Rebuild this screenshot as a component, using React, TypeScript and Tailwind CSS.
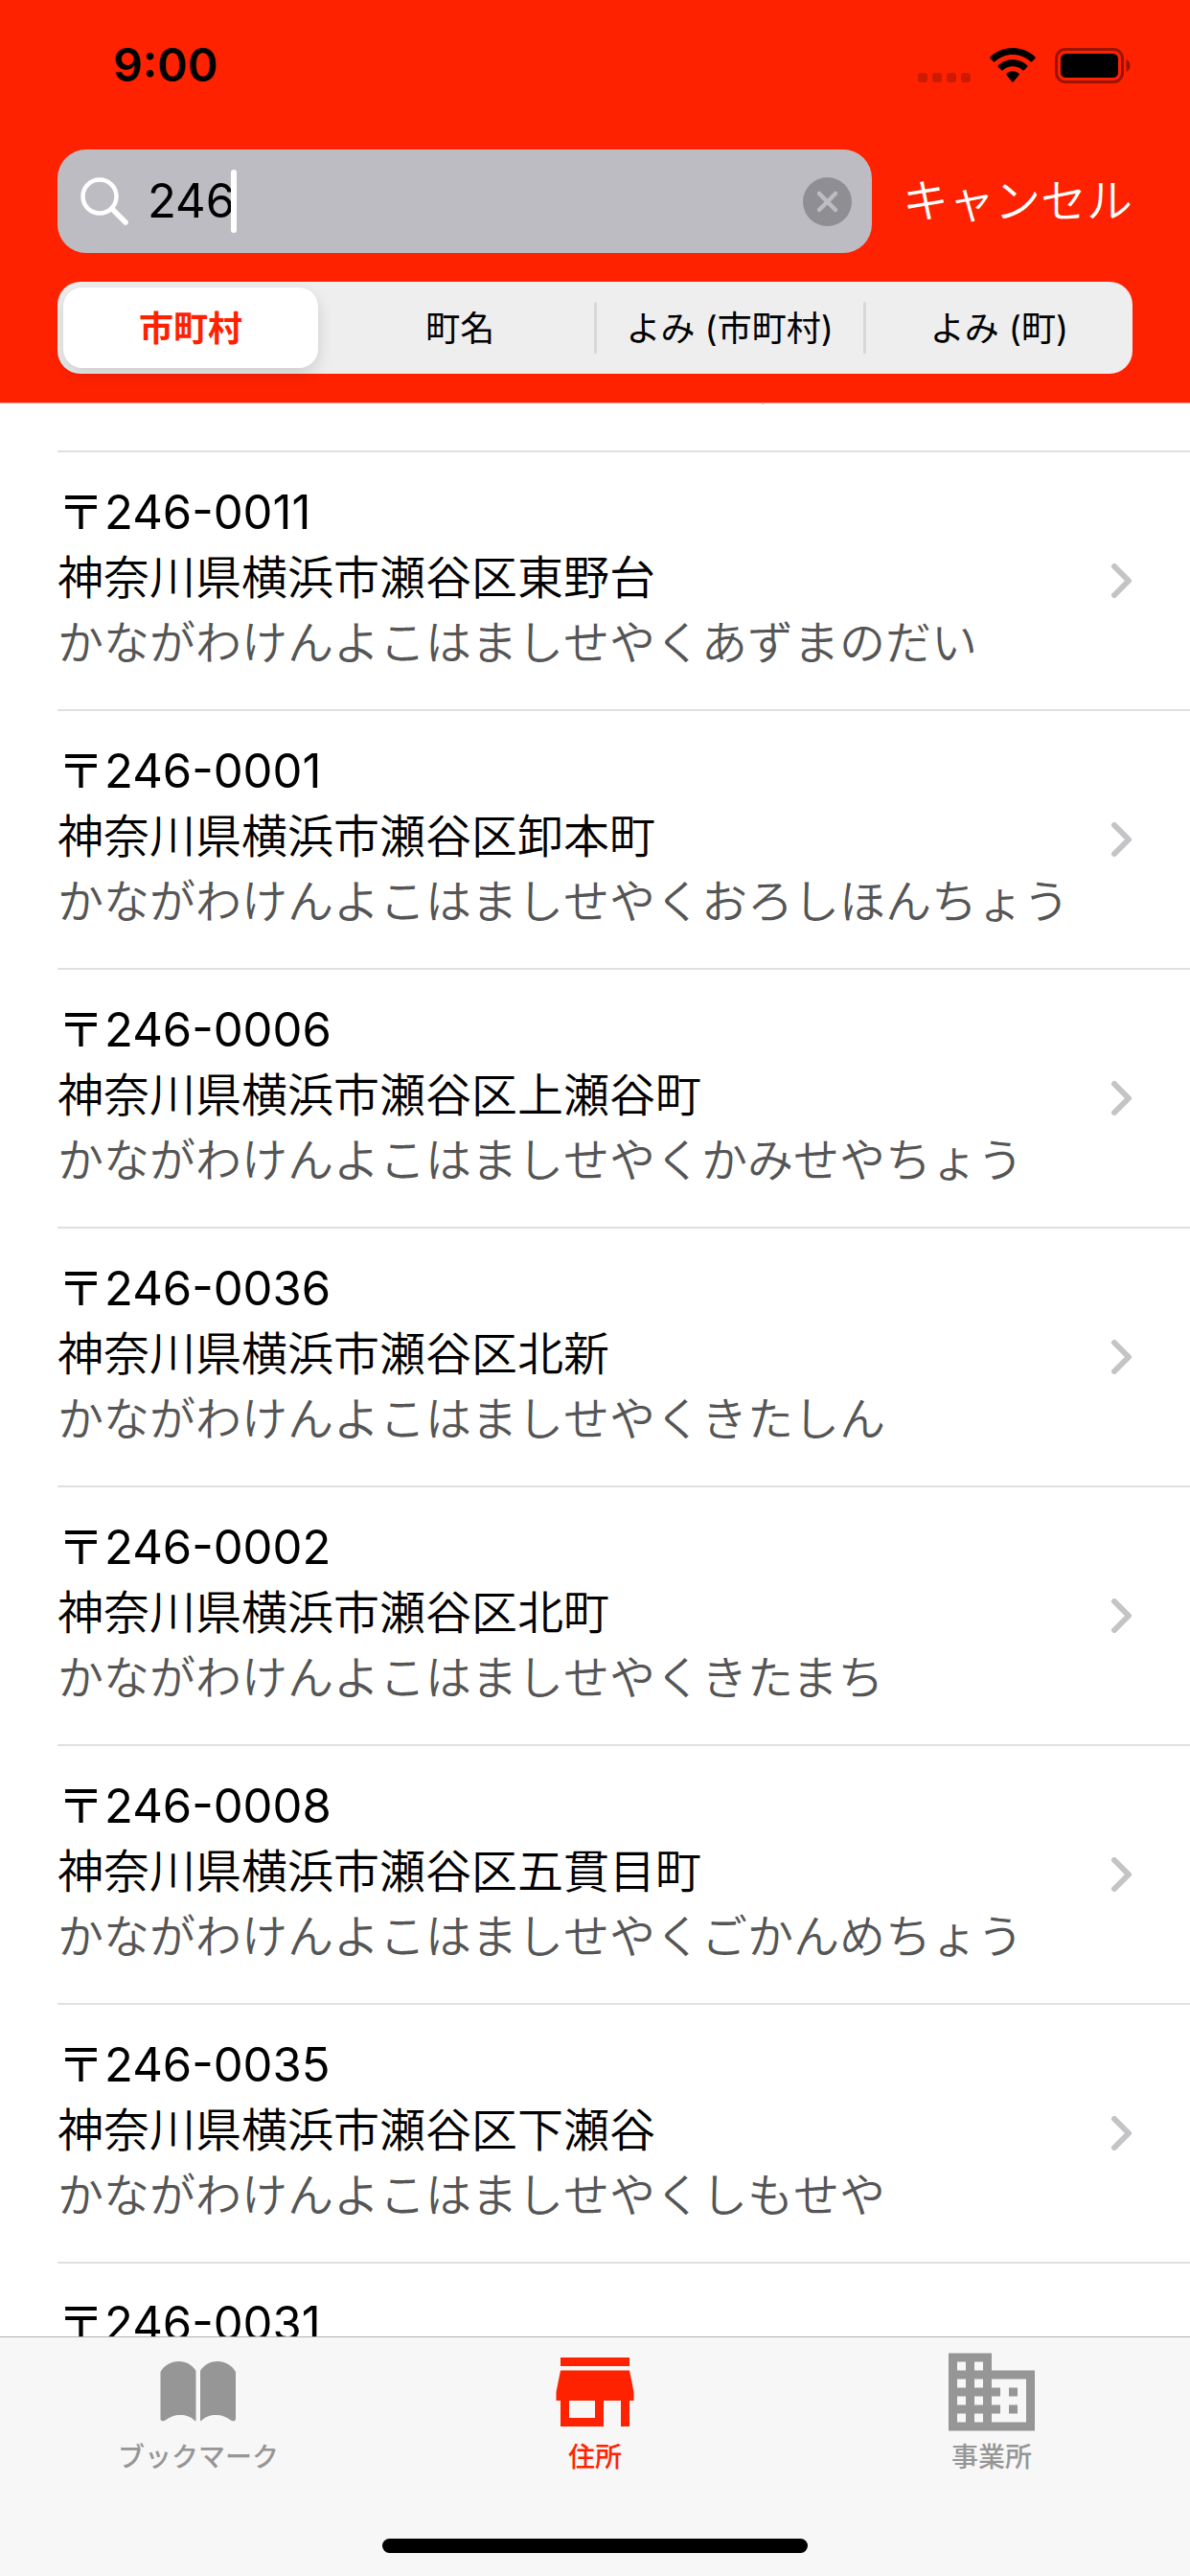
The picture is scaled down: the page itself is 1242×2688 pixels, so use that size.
import React, { useLayoutEffect, useRef, useState } from 'react';
import { MdBusiness, MdStore } from 'react-icons/md';

interface Address {
  zip: string;
  name: string;
  kana: string;
}

const addresses: Address[] = [
  { zip: '246-0012', name: '神奈川県横浜市瀬谷区東野', kana: 'かながわけんよこはましせやくあずまの' },
  { zip: '246-0011', name: '神奈川県横浜市瀬谷区東野台', kana: 'かながわけんよこはましせやくあずまのだい' },
  { zip: '246-0001', name: '神奈川県横浜市瀬谷区卸本町', kana: 'かながわけんよこはましせやくおろしほんちょう' },
  { zip: '246-0006', name: '神奈川県横浜市瀬谷区上瀬谷町', kana: 'かながわけんよこはましせやくかみせやちょう' },
  { zip: '246-0036', name: '神奈川県横浜市瀬谷区北新', kana: 'かながわけんよこはましせやくきたしん' },
  { zip: '246-0002', name: '神奈川県横浜市瀬谷区北町', kana: 'かながわけんよこはましせやくきたまち' },
  { zip: '246-0008', name: '神奈川県横浜市瀬谷区五貫目町', kana: 'かながわけんよこはましせやくごかんめちょう' },
  { zip: '246-0035', name: '神奈川県横浜市瀬谷区下瀬谷', kana: 'かながわけんよこはましせやくしもせや' },
  { zip: '246-0031', name: '神奈川県横浜市瀬谷区瀬谷', kana: 'かながわけんよこはましせやくせや' },
];

const scopes = ['市町村', '町名', 'よみ (市町村)', 'よみ (町)'];

const StatusBar = () => (
  <div className="flex h-[136px] items-center justify-between pr-0.5 pl-[58px]">
    <span className="text-[48px] leading-none font-semibold">9:00</span>
    <div className="flex items-center">
      <svg className="mr-5 h-9 w-[55px]" viewBox="0 0 55 36" fill="#000" fillOpacity="0.2">
        <rect x="0" y="26" width="10" height="10" rx="3" />
        <rect x="15" y="26" width="10" height="10" rx="3" />
        <rect x="30" y="26" width="10" height="10" rx="3" />
        <rect x="45" y="26" width="10" height="10" rx="3" />
      </svg>
      <svg className="mr-5 h-9 w-12" viewBox="0 0 48 36">
        <path d="M24 0C33 0 41.600 3.600 47.500 9.400c.5.5.5 1 0 1.500l-3.300 3.400c-.5.5-1 .5-1.500 0C37.700 9.600 31 7 24 7S10.300 9.600 5.300 14.300c-.5.5-1 .5-1.500 0L.5 10.900c-.5-.5-.5-1 0-1.500C6.400 3.600 15 0 24 0z" />
        <path d="M24 12.300c5.900 0 11.200 2.300 15.200 6 .5.5.5 1 0 1.500l-3.400 3.500c-.5.5-1 .5-1.500 0-2.700-2.500-6.300-4-10.300-4s-7.600 1.500-10.300 4c-.5.500-1 .5-1.500 0l-3.400-3.500c-.5-.5-.5-1 0-1.500 4-3.700 9.300-6 15.200-6z" />
        <path d="M24 24.300c2.500 0 4.800 1 6.500 2.500.5.5.5 1 0 1.500l-5.700 6.900c-.5.6-1.100.6-1.600 0l-5.700-6.900c-.5-.5-.5-1 0-1.500 1.700-1.500 4-2.500 6.500-2.500z" />
      </svg>
      <svg className="h-[37px] w-[79px]" viewBox="0 0 79 37">
        <rect x="1.500" y="1.500" width="69" height="34" rx="9.500" fill="none" stroke="#000" strokeOpacity="0.4" strokeWidth="3" />
        <rect x="6" y="6" width="60" height="25" rx="5.500" />
        <path d="M74.500 12c2.500 1 4 3.500 4 6.500s-1.500 5.500-4 6.500z" fillOpacity="0.4" />
      </svg>
    </div>
  </div>
);

const BookIcon = () => (
  <svg className="size-[108px]" viewBox="0 0 108 108" fill="currentColor">
    <path d="M14.500 33c4-7 11-11 19-11s14.500 4 18 10v51.500c0 .8-.8 1-1.300.4C46.500 80 41 78 35 78s-11 2-15.500 5.600c-1.500 1.200-5 1-5-1.600z" />
    <path d="M93 33c-4-7-11-11-19-11s-14.500 4-18 10v51.500c0 .8.8 1 1.300.4C61 80 66.500 78 72.500 78s11 2 15.500 5.600c1.500 1.200 5 1 5-1.600z" />
  </svg>
);

const tabs = [
  { label: 'ブックマーク', icon: <BookIcon /> },
  { label: '住所', icon: <MdStore className="size-[108px]" /> },
  { label: '事業所', icon: <MdBusiness className="size-[108px]" /> },
];

const AddressRow = ({ zip, name, kana }: Address) => (
  <li className="pl-[60px]">
    <a href="#" className="flex items-center justify-between border-b-2 border-[#e0e0e0] pr-[60px]">
      <div className="pt-[29px] pb-[35px] text-[48px] leading-[68px] font-[350] whitespace-nowrap">
        <p className="text-[49px] font-normal">〒{zip}</p>
        <p>{name}</p>
        <p className="text-[#555555]">{kana}</p>
      </div>
      <svg className="h-9 w-6 shrink-0" viewBox="0 0 24 36" fill="none" stroke="#c4c4c7" strokeWidth="6" strokeLinecap="round" strokeLinejoin="round">
        <path d="M5 3l15 15L5 33" />
      </svg>
    </a>
  </li>
);

const App = () => {
  const [query, setQuery] = useState('246');
  const [scope, setScope] = useState(0);
  const [tab, setTab] = useState(1);
  const listRef = useRef<HTMLElement>(null);

  useLayoutEffect(() => {
    if (listRef.current) listRef.current.scrollTop = 219;
  }, []);

  return (
    <div className="flex h-screen flex-col bg-white font-['Inter','Noto_Sans_CJK_JP',sans-serif] text-black" lang="ja">
      <header className="border-b border-[#ea9d92] bg-[#ff2200] px-[60px] pb-[30px]">
        <StatusBar />

        <div className="mt-5 flex items-center gap-8">
          <label className="flex h-[108px] flex-1 items-center rounded-[30px] bg-[#bdbcc2] pr-[21px] pl-6">
            <svg className="mr-5 size-[50px] shrink-0" viewBox="0 0 50 50" fill="none" stroke="#fff" strokeLinecap="round">
              <circle cx="20" cy="20" r="17.500" strokeWidth="4.500" />
              <path d="M33 33l14 14" strokeWidth="5.500" />
            </svg>
            <input
              type="text"
              aria-label="検索"
              value={query}
              onChange={(e) => setQuery(e.target.value)}
              className="field-sizing-content text-[49px] leading-[66px] outline-none"
            />
            <span className="-ml-1 h-[66px] w-[6px] rounded-full bg-white" />
            <button type="button" aria-label="消去" onClick={() => setQuery('')} className="ml-auto">
              <svg className="size-[51px]" viewBox="0 0 51 51">
                <circle cx="25.500" cy="25.500" r="25.500" fill="#8e8e93" />
                <path d="M17 17l17 17M34 17L17 34" stroke="#bdbcc2" strokeWidth="4.500" strokeLinecap="round" />
              </svg>
            </button>
          </label>
          <button type="button" className="text-[48px] leading-[66px] font-[350] text-white">キャンセル</button>
        </div>

        <div className="mt-[30px] flex h-24 items-center rounded-3xl bg-[#eeeeef] py-[6px]">
          {scopes.map((label, i) => (
            <React.Fragment key={label}>
              {i > 0 && (
                <span className={`h-[54px] w-[3px] rounded-full ${i === scope || i - 1 === scope ? 'bg-transparent' : 'bg-[#d8d8da]'}`} />
              )}
              <button
                type="button"
                onClick={() => setScope(i)}
                className={`mx-[6px] h-full flex-1 basis-0 rounded-[20px] pt-0.5 text-[36px] whitespace-nowrap ${
                  i === scope ? 'bg-white font-bold text-[#ff2200] shadow-[0_6px_16px_rgba(0,0,0,0.14)]' : ''
                }`}
              >
                {label}
              </button>
            </React.Fragment>
          ))}
        </div>
      </header>

      <main ref={listRef} className="min-h-0 flex-1 overflow-y-auto [scrollbar-width:none]">
        <ul>
          {addresses.map((address) => (
            <AddressRow key={address.zip} {...address} />
          ))}
        </ul>
      </main>

      <footer className="border-t border-[#b0b0b2] bg-[#f7f7f7]">
        <nav className="flex pt-[3px]">
          {tabs.map(({ label, icon }, i) => (
            <button
              key={label}
              type="button"
              onClick={() => setTab(i)}
              className={`flex flex-1 basis-0 flex-col items-center text-[28px] leading-7 font-medium ${
                i === tab ? 'text-[#ff2200]' : 'text-[#969696]'
              }`}
            >
              {icon}
              {label}
            </button>
          ))}
        </nav>
        <div className="mx-auto mt-[71px] mb-6 h-[15px] w-[444px] rounded-full bg-black" />
      </footer>
    </div>
  );
};

export default App;
